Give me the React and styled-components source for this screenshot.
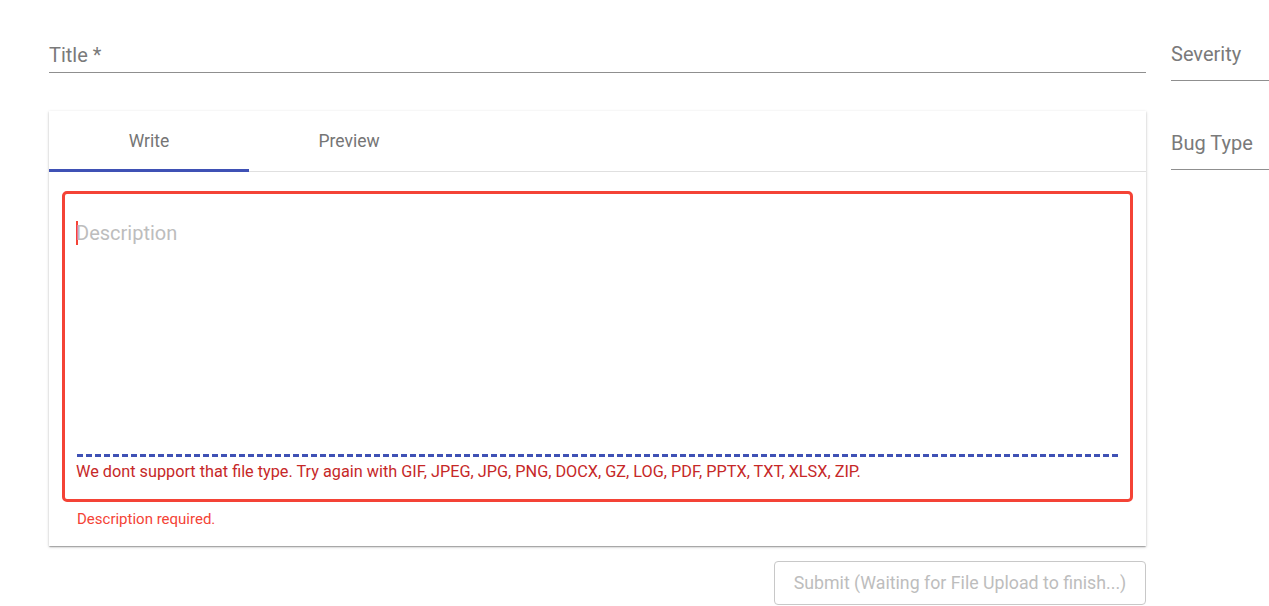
import React from 'react';
import styled, { createGlobalStyle } from 'styled-components';

const GlobalStyle = createGlobalStyle`
  body {
    margin: 0;
    background: #fff;
    font-family: Roboto, "Liberation Sans", sans-serif;
    overflow: hidden;
  }
`;

const Page = styled.div`
  display: flex;
  gap: 25px;
  padding: 0 0 0 49px;
  width: 1269px;
  height: 606px;
  box-sizing: border-box;
  overflow: hidden;
`;

const MainColumn = styled.div`
  width: 1097px;
  flex-shrink: 0;
  display: flex;
  flex-direction: column;
`;

const SideColumn = styled.div`
  width: 140px;
  flex-shrink: 0;
  display: flex;
  flex-direction: column;
  padding-top: 30px;
`;

const Field = styled.div`
  height: ${p => p.$height}px;
  box-sizing: border-box;
  border-bottom: 1px solid #8f8f8f;
  display: flex;
  align-items: flex-end;
  padding-bottom: ${p => p.$pad}px;
  margin-bottom: ${p => p.$gap || 0}px;
`;

const Label = styled.span`
  font-size: 20px;
  color: #7a7a7a;
  line-height: 1;
`;

const Card = styled.div`
  margin-top: 38px;
  background: #fff;
  box-shadow: 0 1px 3px rgba(0, 0, 0, 0.2), 0 1px 1px rgba(0, 0, 0, 0.14),
    0 2px 1px -1px rgba(0, 0, 0, 0.12);
  display: flex;
  flex-direction: column;
`;

const Tabs = styled.div`
  display: flex;
  height: 60px;
  border-bottom: 1px solid #e0e0e0;
`;

const Tab = styled.div`
  width: 200px;
  display: flex;
  align-items: center;
  justify-content: center;
  font-size: 17.5px;
  color: #757575;
  position: relative;
  ${p => p.$active && `
    &::after {
      content: '';
      position: absolute;
      left: 0;
      right: 0;
      bottom: -1px;
      height: 3px;
      background: #3f51b5;
    }
  `}
`;

const CardBody = styled.div`
  padding: 19px 13px 18px 13px;
`;

const Editor = styled.div`
  height: 311px;
  box-sizing: border-box;
  border: 3px solid #f44336;
  border-radius: 5px;
  padding: 27px 12px 0 11px;
  display: flex;
  flex-direction: column;
`;

const Placeholder = styled.div`
  font-size: 20px;
  color: #bdbdbd;
  flex: 1;
  display: flex;
  align-items: flex-start;
`;

const Caret = styled.span`
  display: inline-block;
  width: 2px;
  height: 24px;
  background: #f44336;
  margin-right: -2px;
`;

const DashLine = styled.div`
  height: 3px;
  background-image: linear-gradient(to right, #3f51b5 0 6px, transparent 6px 9px);
  background-size: 9px 3px;
  margin: 0 0 6px 1px;
`;

const UploadError = styled.div`
  font-size: 16.25px;
  color: #c62828;
  line-height: 18px;
  margin: 0 0 18px 0;
`;

const HelperText = styled.div`
  font-size: 15px;
  color: #f44336;
  padding: 8px 0 0 15px;
`;

const Actions = styled.div`
  display: flex;
  justify-content: flex-end;
  margin-top: 15px;
`;

const SubmitButton = styled.button`
  width: 372px;
  height: 44px;
  border: 1px solid #c8c8c8;
  border-radius: 4px;
  background: #fff;
  font-family: Roboto, "Liberation Sans", sans-serif;
  font-size: 17.75px;
  color: #bdbdbd;
  cursor: default;
`;

export default function App() {
  return (
    <>
      <GlobalStyle />
      <Page>
        <MainColumn>
          <Field $height={73} $pad={7}>
            <Label>Title *</Label>
          </Field>
          <Card>
            <Tabs>
              <Tab $active>Write</Tab>
              <Tab>Preview</Tab>
            </Tabs>
            <CardBody>
              <Editor>
                <Placeholder>
                  <Caret />
                  Description
                </Placeholder>
                <DashLine />
                <UploadError>
                  We dont support that file type. Try again with GIF, JPEG, JPG, PNG, DOCX, GZ, LOG, PDF, PPTX, TXT, XLSX, ZIP.
                </UploadError>
              </Editor>
              <HelperText>Description required.</HelperText>
            </CardBody>
          </Card>
          <Actions>
            <SubmitButton disabled>Submit (Waiting for File Upload to finish...)</SubmitButton>
          </Actions>
        </MainColumn>
        <SideColumn>
          <Field $height={51} $pad={16} $gap={38}>
            <Label>Severity</Label>
          </Field>
          <Field $height={51} $pad={16}>
            <Label>Bug Type</Label>
          </Field>
        </SideColumn>
      </Page>
    </>
  );
}
